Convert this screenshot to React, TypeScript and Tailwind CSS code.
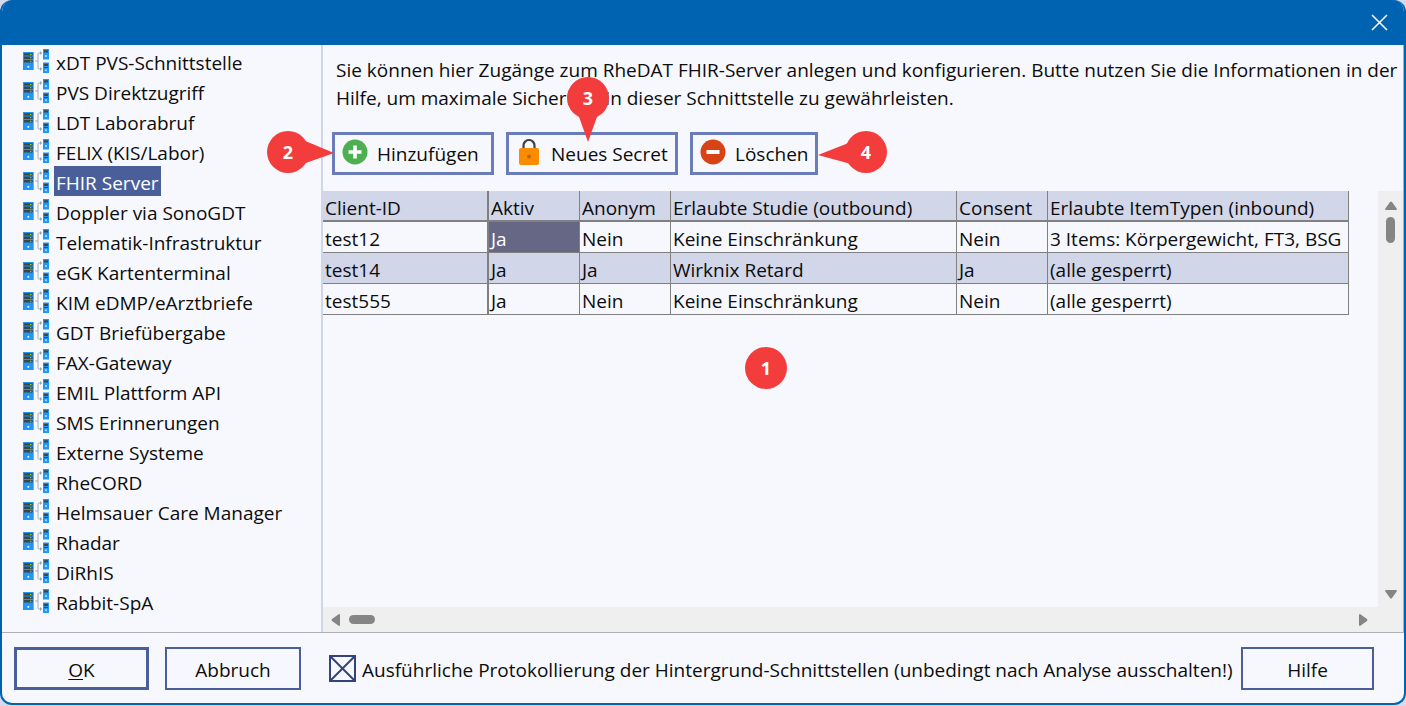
import { useState } from 'react'
import clsx from 'clsx'

const SECTIONS = [
  'xDT PVS-Schnittstelle',
  'PVS Direktzugriff',
  'LDT Laborabruf',
  'FELIX (KIS/Labor)',
  'FHIR Server',
  'Doppler via SonoGDT',
  'Telematik-Infrastruktur',
  'eGK Kartenterminal',
  'KIM eDMP/eArztbriefe',
  'GDT Briefübergabe',
  'FAX-Gateway',
  'EMIL Plattform API',
  'SMS Erinnerungen',
  'Externe Systeme',
  'RheCORD',
  'Helmsauer Care Manager',
  'Rhadar',
  'DiRhIS',
  'Rabbit-SpA',
]

const COLUMNS = ['Client-ID', 'Aktiv', 'Anonym', 'Erlaubte Studie (outbound)', 'Consent', 'Erlaubte ItemTypen (inbound)']

const CLIENTS = [
  ['test12', 'Ja', 'Nein', 'Keine Einschränkung', 'Nein', '3 Items: Körpergewicht, FT3, BSG'],
  ['test14', 'Ja', 'Ja', 'Wirknix Retard', 'Ja', '(alle gesperrt)'],
  ['test555', 'Ja', 'Nein', 'Keine Einschränkung', 'Nein', '(alle gesperrt)'],
]

function ServerIcon() {
  return (
    <svg width="26" height="24" viewBox="0 0 26 24" className="shrink-0" aria-hidden="true">
      <rect x="0" y="3" width="10.700" height="18" fill="#2196f3" />
      <path d="M1 4.200h8.700v2.400H1zM1 7.600h8.700V10H1zM1 11h8.700v2.400H1z" fill="#37474f" />
      <path d="M7 5h1.500v1H7zM7 8.300h1.500v1H7zM7 11.700h1.500v1H7z" fill="#a5d610" />
      <circle cx="5.300" cy="17.800" r="1.100" fill="#e3f2fd" />
      <path d="M12 12h3M18.500 4H16q-1 0-1 1v14q0 1 1 1h2.500" fill="none" stroke="#a3b1b8" strokeWidth="1" />
      <path d="M17 2l2 2-2 2zM17 18l2 2-2 2z" fill="#90a4ae" />
      <rect x="20" y="0" width="6" height="10.500" fill="#2196f3" />
      <path d="M21 1.300h4v2.200h-4z" fill="#37474f" />
      <circle cx="23" cy="7" r="1" fill="#bbdefb" />
      <rect x="20" y="13.500" width="6" height="10.500" fill="#2196f3" />
      <path d="M21 14.800h4V17h-4zM21 18h4v1h-4z" fill="#37474f" />
      <circle cx="23" cy="21.300" r="1" fill="#bbdefb" />
    </svg>
  )
}

function AddIcon() {
  return (
    <svg width="26" height="26" viewBox="0 0 26 26" aria-hidden="true">
      <circle cx="13" cy="13" r="12.500" fill="#4caf50" />
      <path d="M13 6.500v13M6.500 13h13" stroke="#fff" strokeWidth="3.600" />
    </svg>
  )
}

function LockIcon() {
  return (
    <svg width="22" height="26" viewBox="0 0 22 26" aria-hidden="true">
      <path d="M5.500 10V6.500a5.500 5.500 0 0 1 11 0V10" fill="none" stroke="#424242" strokeWidth="2.200" />
      <rect x="1" y="9" width="20" height="17" rx="2" fill="#fb8c00" />
      <circle cx="11" cy="17.500" r="2" fill="#c56200" />
    </svg>
  )
}

function RemoveIcon() {
  return (
    <svg width="26" height="26" viewBox="0 0 26 26" aria-hidden="true">
      <circle cx="13" cy="13" r="12.500" fill="#d84315" />
      <path d="M6.500 13h13" stroke="#fff" strokeWidth="4" />
    </svg>
  )
}

// Nummerierte Markierung, className bestimmt die Lage
function Marker({ n, tip, className }: { n: number; tip?: string; className: string }) {
  return (
    <span className={clsx('pointer-events-none absolute z-10 flex size-[42px] items-center justify-center text-[18px] font-bold text-white', className)}>
      <svg width="42" height="42" viewBox="0 0 42 42" className="absolute inset-0 overflow-visible" aria-hidden="true">
        <circle cx="21" cy="21" r="21" fill="#f33c3c" />
        {tip && <path d={tip} fill="#f33c3c" />}
      </svg>
      <span className="relative">{n}</span>
    </span>
  )
}

const toolBtn = 'flex h-[43px] items-center border-3 border-[#6a7db8] pt-px whitespace-nowrap'
const footBtn = 'h-[43px] shrink-0 border-[#4a5f9a] pt-1'

export default function App() {
  const [active, setActive] = useState('FHIR Server')
  const [logging, setLogging] = useState(true)

  return (
    <div className="min-h-screen bg-[#d5dbee] pb-px font-['Open_Sans','Noto_Sans',sans-serif] text-[19px] text-[#0c0c0c]">
      <div className="flex min-h-[calc(100vh-1px)] flex-col overflow-hidden rounded-xl border-2 border-t-0 border-[#0063b1] bg-[#f7f8fd]">
        <header className="flex h-[45px] items-center justify-end bg-[#0063b1] pr-4">
          <button type="button" aria-label="Schließen" className="text-white">
            <svg width="17" height="17" viewBox="0 0 17 17" aria-hidden="true">
              <path d="M1 1l15 15M16 1L1 16" stroke="currentColor" strokeWidth="1.500" />
            </svg>
          </button>
        </header>

        <div className="flex grow border-b border-[#b0b0b4]">
          <nav className="w-[321px] shrink-0 border-r-2 border-[#d0d6ea] pt-px pl-[21px]">
            <ul>
              {SECTIONS.map((s) => (
                <li key={s} className="flex h-[30px] items-center gap-[5px]">
                  <ServerIcon />
                  <button
                    type="button"
                    onClick={() => setActive(s)}
                    className={clsx('h-[30px] px-0.5 pt-1 leading-[26px]', s === active && 'bg-[#4a5f9a] text-white')}
                  >
                    {s}
                  </button>
                </li>
              ))}
            </ul>
          </nav>

          <main className="relative flex min-w-0 grow flex-col border-r border-[#b0b0b4]">
            <p className="pt-[11px] pl-[13px] leading-7">
              Sie können hier Zugänge zum RheDAT FHIR-Server anlegen und konfigurieren. Butte nutzen Sie die
              Informationen in der Hilfe, um maximale Sicherheit in dieser Schnittstelle zu gewährleisten.
            </p>

            <div className="mt-5 mb-4 flex gap-3 pl-[9px]">
              <div className="relative">
                <button type="button" className={clsx(toolBtn, 'w-[162px] gap-[9px] pl-[7px]')}>
                  <span className="pb-1"><AddIcon /></span>
                  Hinzufügen
                </button>
                <Marker n={2} tip="M36 9L67 22L36 33Z" className="-top-px left-[-65px]" />
              </div>
              <div className="relative">
                <button type="button" className={clsx(toolBtn, 'w-[172px] gap-[11px] pl-[9px]')}>
                  <span className="pb-1"><LockIcon /></span>
                  Neues Secret
                </button>
                <Marker n={3} tip="M11 37L21 65L31 37Z" className="-top-[55px] left-[61px]" />
              </div>
              <div className="relative">
                <button type="button" className={clsx(toolBtn, 'w-[128px] gap-[9px] pl-[7px]')}>
                  <span className="pb-1"><RemoveIcon /></span>
                  Löschen
                </button>
                <Marker n={4} tip="M6 11L-27 24L6 33Z" className="-top-px left-[155px]" />
              </div>
            </div>

            <div className="flex grow">
              <div className="min-w-0 grow overflow-hidden">
                <table className="w-[1026px] table-fixed border-separate border-spacing-0 text-left leading-6 whitespace-nowrap">
                  <colgroup>
                    <col className="w-[166px]" />
                    <col className="w-[91px]" />
                    <col className="w-[91px]" />
                    <col className="w-[286px]" />
                    <col className="w-[91px]" />
                    <col className="w-[301px]" />
                  </colgroup>
                  <thead>
                    <tr className="h-[31px] bg-[#d1d6e9]">
                      {COLUMNS.map((c) => (
                        <th key={c} className="border-r border-b-2 border-[#808080] p-0 pt-1 pl-0.5 font-normal first:border-r-2">
                          {c}
                        </th>
                      ))}
                    </tr>
                  </thead>
                  <tbody>
                    {CLIENTS.map((row, r) => (
                      <tr key={row[0]} className="h-[31px] even:bg-[#d1d6e9]">
                        {row.map((cell, c) => (
                          <td
                            key={c}
                            className={clsx(
                              'border-r border-b border-[#808080] p-0 pt-1 pl-0.5 first:border-r-2',
                              r === 0 && c === 1 && 'bg-[#666685] text-white',
                            )}
                          >
                            {cell}
                          </td>
                        ))}
                      </tr>
                    ))}
                  </tbody>
                </table>
              </div>
              <div className="flex w-[25px] shrink-0 flex-col items-center justify-between bg-[#efefef] pt-2.5 pb-2">
                <div className="flex flex-col items-center gap-1.5">
                  <svg width="12" height="10" viewBox="0 0 12 10" fill="#858585" aria-hidden="true"><path d="M5 1q1-1 2 0l5 7q0 1-1 1H1q-1 0-1-1z" /></svg>
                  <div className="h-[26px] w-[9px] rounded-full bg-[#858585]" />
                </div>
                <svg width="12" height="10" viewBox="0 0 12 10" fill="#858585" aria-hidden="true"><path d="M5 9q1 1 2 0l5-7q0-1-1-1H1q-1 0-1 1z" /></svg>
              </div>
            </div>
            <div className="flex h-[25px] items-center justify-between bg-[#efefef] pr-[35px] pl-2">
              <div className="flex items-center gap-2">
                <svg width="10" height="12" viewBox="0 0 10 12" fill="#858585" aria-hidden="true"><path d="M1 5q-1 1 0 2l7 5q1 0 1-1V1q0-1-1-1z" /></svg>
                <div className="h-[9px] w-[26px] rounded-full bg-[#858585]" />
              </div>
              <svg width="10" height="12" viewBox="0 0 10 12" fill="#858585" aria-hidden="true"><path d="M9 5q1 1 0 2l-7 5q-1 0-1-1V1q0-1 1-1z" /></svg>
            </div>

            <Marker n={1} className="top-[302px] left-[422px]" />
          </main>
        </div>

        <footer className="flex h-[70px] items-center pr-[30px] pl-3">
          <button type="button" className={clsx(footBtn, 'w-[135px] border-3')}>
            <span className="underline underline-offset-2">O</span>K
          </button>
          <button type="button" className={clsx(footBtn, 'ml-4 w-[136px] border-2')}>Abbruch</button>
          <label className="ml-7 flex items-center gap-1.5 whitespace-nowrap">
            <span className="grid size-[27px]">
              <input
                type="checkbox"
                checked={logging}
                onChange={(e) => setLogging(e.target.checked)}
                className="peer col-start-1 row-start-1 size-[27px] appearance-none border-2 border-[#34447a]"
              />
              <svg viewBox="0 0 27 27" className="pointer-events-none invisible col-start-1 row-start-1 size-[27px] peer-checked:visible" aria-hidden="true">
                <path d="M2 2l23 23M25 2L2 25" stroke="#34447a" strokeWidth="2" />
              </svg>
            </span>
            <span className="pt-1">Ausführliche Protokollierung der Hintergrund-Schnittstellen (unbedingt nach Analyse ausschalten!)</span>
          </label>
          <button type="button" className={clsx(footBtn, 'ml-auto w-[133px] border-2')}>Hilfe</button>
        </footer>
      </div>
    </div>
  )
}
